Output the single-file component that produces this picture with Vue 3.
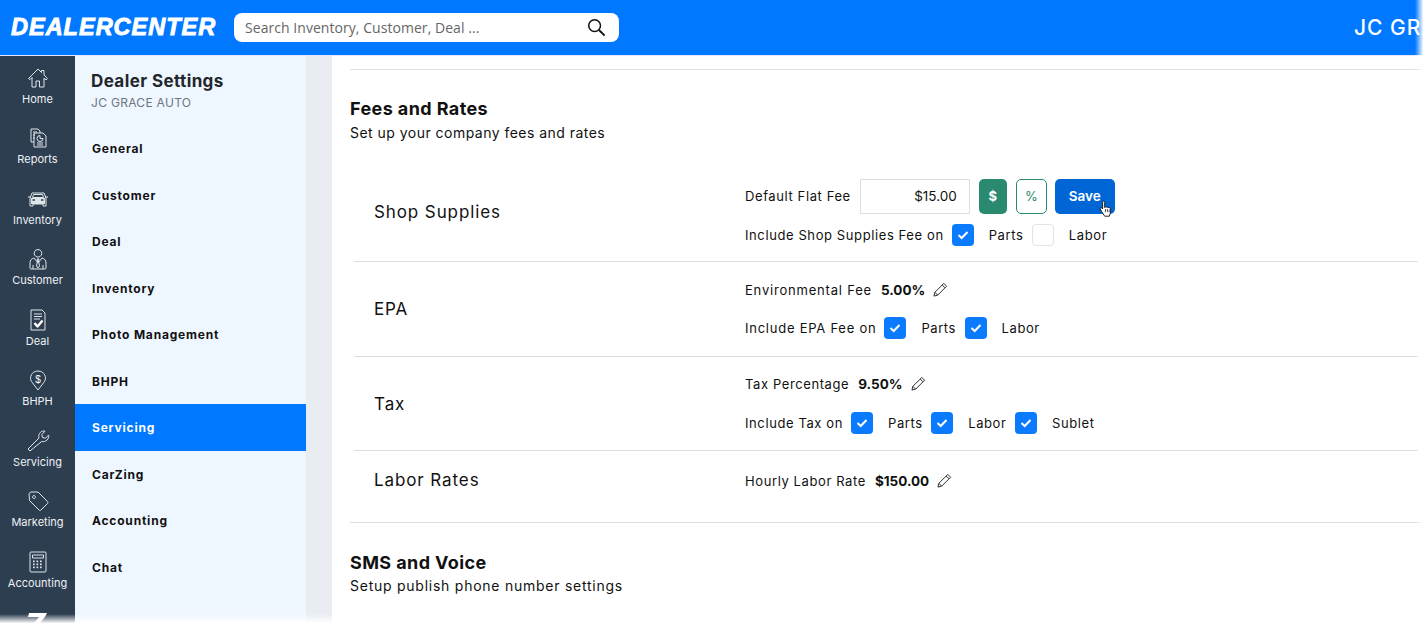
<script setup>
const P = {
  home: ['M2.5 12.5 12 3l3.5 3.5V4.5h2.5v4.5l3.5 3.5-1.5 1.500-2-2V21h-4.500v-6h-3.500v6H6v-9.500l-2 2z'],
  reports: ['M5 3h7l2 2v2M5 3v13h3M7 6h4M7 9h2M7 12h2', 'M8 7h7l2 0 3 3v11H8z', 'M11 17h6M11 19h6', 'M14 9.500a3 3 0 1 0 3 3h-3z'],
  car: ['M6 6h12l2 5v8h-3v-2H7v2H4v-8z', 'M7.500 7.500h9l1 3h-11zM2 10h3M19 10h3', 'M7 13h2M15 13h2'],
  customer: ['M12 2.500a3.800 3.800 0 1 1-.01 0z', 'M8 11c-2.500.8-4 2-4 5v5c0 .6.500 1 1 1h14c.6 0 1-.4 1-1v-5c0-3-1.500-4.200-4-5l-4 5z', 'M11 12h2l-.5 2 1 5-1.500 2-1.500-2 1-5z', 'M7 18v4M17 18v4'],
  deal: ['M5 2h11l3 3v17H5z', 'M8 6h8M8 8.500h8M8 11h6'],
  bhph: ['M12 22 5.500 13.500C3 9.500 5.500 3 12 3s9 6.500 6.500 10.500z'],
  servicing: ['M4 22l-2-2 11-11c-1-3 .8-7 5-7l1 .2-3.200 3.300.7 3 3 .7L22.700 6c.6 4-3 7.500-7 6.500z'],
  marketing: ['M3 4.500 5 3h7l9.500 9.500c.6.600.6 1.400 0 2L15 21c-.6.600-1.400.600-2 0L3.500 11.500z', 'M8 6.500a1.500 1.500 0 1 1-.01 0z'],
  accounting: ['M5 2h14c.6 0 1 .4 1 1v18c0 .6-.4 1-1 1H5c-.6 0-1-.4-1-1V3c0-.6.4-1 1-1z', 'M6.500 5h11v3h-11z'],
}
const rail = [
  ['Home', 'home'], ['Reports', 'reports'], ['Inventory', 'car'], ['Customer', 'customer'], ['Deal', 'deal'],
  ['BHPH', 'bhph'], ['Servicing', 'servicing'], ['Marketing', 'marketing'], ['Accounting', 'accounting'],
].map(([label, icon]) => ({ label, icon, paths: P[icon] }))
const menu = ['General', 'Customer', 'Deal', 'Inventory', 'Photo Management', 'BHPH', 'Servicing', 'CarZing', 'Accounting', 'Chat']
const keys = []
for (let y = 11; y < 20; y += 3) for (let x = 8; x < 17; x += 3.500) keys.push({ x, y })
</script>

<template>
  <div class="page">
    <header class="topbar">
      <div class="logo">DEALERCENTER</div>
      <div class="search">
        <input class="search-input" placeholder="Search Inventory, Customer, Deal ..." />
        <svg class="search-icon" viewBox="0 0 20 20" fill="none" stroke="#111" stroke-width="1.600"><circle cx="8" cy="8" r="6.200" /><path d="m12.600 12.600 6 6" stroke-width="2" /></svg>
      </div>
      <div class="dealer">JC GRACE AUTO</div>
    </header>

    <div class="body">
      <nav class="rail">
        <a v-for="item in rail" :key="item.label" class="rail-item">
          <svg class="rail-icon" viewBox="0 0 24 24" fill="none" stroke="#dfe4e9" stroke-width="1" stroke-linejoin="round">
            <path v-for="d in item.paths" :key="d" :d="d" />
            <template v-if="item.icon === 'deal'"><path d="m8.500 15 3 3.500 5-6" stroke="#fff" stroke-width="2.400" /></template>
            <text v-if="item.icon === 'bhph'" class="dollar" x="12" y="14.500">$</text>
            <template v-if="item.icon === 'accounting'"><rect v-for="k in keys" :key="k.x + '-' + k.y" :x="k.x - 1" :y="k.y - .500" width="1.700" height="1.700" fill="#dfe4e9" stroke="none" /></template>
            <template v-if="item.icon === 'car'"><path d="M5 11h14v6H5z" fill="#dfe4e9" stroke="none" /><path d="M6.500 13h2.500M15 13h2.500" stroke="#2d3e50" stroke-width="1.500" /></template>
          </svg>
          <span class="rail-label">{{ item.label }}</span>
        </a>
        <svg class="rail-logo" viewBox="0 0 20 14"><path d="M1 0h18l-1.500 3L9 14H3l8-10H0z" fill="#fff" /></svg>
      </nav>

      <aside class="panel">
        <div class="panel-title">Dealer Settings</div>
        <div class="panel-sub">JC GRACE AUTO</div>
        <ul class="menu">
          <li v-for="m in menu" :key="m" class="menu-item" :class="{ active: m === 'Servicing' }">{{ m }}</li>
        </ul>
      </aside>

      <div class="gutter"></div>

      <main class="content">
        <section class="section fees">
          <h2 class="section-title">Fees and Rates</h2>
          <p class="section-sub">Set up your company fees and rates</p>

          <div class="rows">
            <div class="row row-shop">
              <div class="row-name">Shop Supplies</div>
              <div class="fields gap-10">
                <div class="line">
                  <span>Default Flat Fee</span>
                  <input class="amount" value="$15.00" />
                  <button class="unit unit-on">$</button>
                  <button class="unit unit-off">%</button>
                  <button class="save">Save
                    <svg class="hand" viewBox="0 0 16 20"><path d="M4 1.500c.8-.8 2-.3 2 .8v6l.8-.2c.5-.8 1.700-.7 2 .2.600-.5 1.600-.3 1.900.5.700-.4 1.700 0 1.800.9.300 1.500.2 3.500-.3 5l-1 3.300H6l-3-4.500L1 10c-.4-1 .7-2 1.700-1.200l1 1V2.300z" fill="#fff" stroke="#111" stroke-width="1" stroke-linejoin="round" /><path d="M6.800 10v3.500M9 10v3.500M11 10.500v3" stroke="#111" stroke-width=".8" /></svg>
                  </button>
                </div>
                <div class="line">
                  <span class="cap">Include Shop Supplies Fee on</span>
                  <span class="check on"><svg viewBox="0 0 22 22"><path d="m6.500 11 3.200 3 5.800-6" /></svg></span>
                  <span class="opt">Parts</span>
                  <span class="check"></span>
                  <span class="opt">Labor</span>
                </div>
              </div>
            </div>

            <div class="row row-epa">
              <div class="row-name">EPA</div>
              <div class="fields gap-16">
                <div class="line value-line">
                  <span class="wide">Environmental Fee</span><b>5.00%</b>
                  <svg class="pencil" viewBox="0 0 16 16" fill="none" stroke="#222" stroke-width="1"><path d="M11.500 1.500 14.500 4.500 5 14l-4 1 1-4zM9.800 3.200l3 3M2 11l3 3" /></svg>
                </div>
                <div class="line">
                  <span class="cap cap-epa">Include EPA Fee on</span>
                  <span class="check on"><svg viewBox="0 0 22 22"><path d="m6.500 11 3.200 3 5.800-6" /></svg></span>
                  <span class="opt">Parts</span>
                  <span class="check on"><svg viewBox="0 0 22 22"><path d="m6.500 11 3.200 3 5.800-6" /></svg></span>
                  <span class="opt">Labor</span>
                </div>
              </div>
            </div>

            <div class="row row-tax">
              <div class="row-name">Tax</div>
              <div class="fields gap-17">
                <div class="line value-line">
                  <span>Tax Percentage</span><b>9.50%</b>
                  <svg class="pencil" viewBox="0 0 16 16" fill="none" stroke="#222" stroke-width="1"><path d="M11.500 1.500 14.500 4.500 5 14l-4 1 1-4zM9.800 3.200l3 3M2 11l3 3" /></svg>
                </div>
                <div class="line">
                  <span class="cap">Include Tax on</span>
                  <span class="check on"><svg viewBox="0 0 22 22"><path d="m6.500 11 3.200 3 5.800-6" /></svg></span>
                  <span class="opt">Parts</span>
                  <span class="check on"><svg viewBox="0 0 22 22"><path d="m6.500 11 3.200 3 5.800-6" /></svg></span>
                  <span class="opt">Labor</span>
                  <span class="check on"><svg viewBox="0 0 22 22"><path d="m6.500 11 3.200 3 5.800-6" /></svg></span>
                  <span class="opt">Sublet</span>
                </div>
              </div>
            </div>

            <div class="row row-labor">
              <div class="row-name">Labor Rates</div>
              <div class="fields fields-labor">
                <div class="line value-line">
                  <span>Hourly Labor Rate</span><b>$150.00</b>
                  <svg class="pencil" viewBox="0 0 16 16" fill="none" stroke="#222" stroke-width="1"><path d="M11.500 1.500 14.500 4.500 5 14l-4 1 1-4zM9.800 3.200l3 3M2 11l3 3" /></svg>
                </div>
              </div>
            </div>
          </div>
        </section>

        <section class="section sms">
          <h2 class="section-title">SMS and Voice</h2>
          <p class="section-sub sub-sms">Setup publish phone number settings</p>
        </section>
      </main>
    </div>

    <div class="fade-right"></div>
    <div class="fade-bottom"></div>
  </div>
</template>

<style scoped>
.page {
  position: relative;
  width: 1425px;
  height: 625px;
  overflow: hidden;
  display: flex;
  flex-direction: column;
  background: #fff;
  font-family: Inter, "Liberation Sans", sans-serif;
  color: #111;
}
.topbar {
  flex: 0 0 55px;
  display: flex;
  align-items: center;
  background: #0078ff;
  border-bottom: 1px solid #dfe9f5;
  box-sizing: content-box;
  white-space: nowrap;
}
.logo {
  flex: 0 0 234px;
  padding-left: 11px;
  box-sizing: border-box;
  font-family: "Liberation Sans", sans-serif;
  font-style: italic;
  font-weight: 700;
  font-size: 23.500px;
  letter-spacing: 1px;
  color: #fff;
  -webkit-text-stroke: .9px #fff;
}
.search {
  position: relative;
  flex: 0 0 385px;
  height: 29px;
  background: #fff;
  border-radius: 8px;
}
.search-input {
  width: 330px;
  height: 29px;
  border: 0;
  outline: 0;
  padding: 0 0 0 11px;
  background: transparent;
  font-family: "Open Sans", sans-serif;
  font-size: 14px;
  letter-spacing: .05px;
}
.search-input::placeholder { color: #666; opacity: 1; }
.search-icon {
  position: absolute;
  left: 353px;
  top: 5px;
  width: 19px;
  height: 19px;
}
.dealer {
  margin-left: 735px;
  font-size: 21px;
  font-weight: 500;
  letter-spacing: 1px;
  color: #fff;
}
.body {
  flex: 1;
  min-height: 0;
  display: flex;
}
.rail {
  position: relative;
  flex: 0 0 75px;
  background: #2d3e50;
  display: flex;
  flex-direction: column;
  overflow: hidden;
}
.rail-item {
  flex: 0 0 60.500px;
  display: flex;
  flex-direction: column;
  align-items: center;
  padding-top: 9.500px;
  box-sizing: border-box;
}
.rail-icon {
  width: 24px;
  height: 24px;
}
.dollar {
  font-family: "Liberation Sans", sans-serif;
  font-size: 10px;
  text-anchor: middle;
  fill: #fff;
  stroke: none;
}
.rail-label {
  margin-top: 2px;
  font-size: 11px;
  line-height: 15px;
  color: #eef1f4;
}
.rail-logo {
  position: absolute;
  left: 28px;
  top: 557px;
  width: 20px;
  height: 14px;
}
.panel {
  flex: 0 0 231px;
  background: #eef6ff;
}
.panel-title {
  margin: 15px 0 0 16px;
  font-size: 17px;
  line-height: 21px;
  font-weight: 700;
  letter-spacing: .4px;
  color: #23262b;
}
.panel-sub {
  margin: 2px 0 0 16px;
  font-size: 12px;
  line-height: 18px;
  letter-spacing: .3px;
  color: #6c757d;
}
.menu {
  list-style: none;
  margin: 13px 0 0;
  padding: 0;
}
.menu-item {
  height: 46.500px;
  line-height: 47px;
  padding-left: 17px;
  font-size: 12px;
  font-weight: 700;
  letter-spacing: .8px;
  color: #111;
}
.menu-item.active {
  background: #0078ff;
  color: #fff;
}
.gutter {
  flex: 0 0 26px;
  background: #e9edf2;
}
.content {
  flex: 1;
  min-width: 0;
  padding: 13px 3px 0 18px;
}
.section-title {
  margin: 0;
  font-size: 18px;
  line-height: 24px;
  font-weight: 700;
  letter-spacing: .4px;
  color: #111;
}
.section-sub {
  margin: 0;
  font-size: 14px;
  line-height: 24px;
  letter-spacing: .47px;
  color: #111;
}
.sub-sms {
  margin-top: -1px;
  letter-spacing: .75px;
}
.fees {
  border-top: 1px solid #e1e1e1;
  border-bottom: 1px solid #ddd;
  padding: 27px 0 13px;
}
.sms {
  padding-top: 28px;
}
.rows {
  margin: 18px 4px 0 4px;
}
.row {
  display: flex;
  align-items: center;
  box-sizing: border-box;
  border-bottom: 1px solid #ddd;
}
.row-shop { height: 99px; }
.row-epa { height: 95px; }
.row-tax { height: 94px; }
.row-labor { height: 58px; border-bottom: 0; }
.row-name {
  flex: 0 0 391px;
  padding-left: 20px;
  box-sizing: border-box;
  font-size: 17px;
  letter-spacing: .9px;
}
.fields {
  display: flex;
  flex-direction: column;
  font-size: 13px;
  letter-spacing: .6px;
}
.fields-labor { padding-top: 2px; }
.gap-10 { gap: 10px; }
.gap-16 { gap: 16px; }
.gap-17 { gap: 17px; }
.line {
  display: flex;
  align-items: center;
  min-height: 22px;
}
.wide { letter-spacing: .8px; }
.value-line b {
  margin-left: 9px;
  font-size: 13.500px;
  font-weight: 700;
  letter-spacing: 0;
}
.pencil {
  width: 15px;
  height: 15px;
  margin-left: 8px;
  margin-bottom: 2px;
}
.amount {
  width: 110px;
  height: 35px;
  margin-left: 9px;
  padding: 0 12px 0 0;
  box-sizing: border-box;
  border: 1px solid #ddd;
  outline: 0;
  text-align: right;
  font-family: inherit;
  font-size: 13.500px;
  letter-spacing: 0;
  color: #111;
}
.unit {
  height: 35px;
  padding: 0;
  border-radius: 5px;
  font-family: inherit;
  font-size: 13px;
}
.unit-on {
  width: 28px;
  margin-left: 9px;
  background: #2a8a70;
  border: 0;
  color: #fff;
  font-weight: 700;
}
.unit-off {
  width: 31px;
  margin-left: 9px;
  background: #fff;
  border: 1px solid #2a8a70;
  color: #2a8a70;
}
.save {
  position: relative;
  width: 60px;
  height: 35px;
  margin-left: 8px;
  padding: 0;
  border: 0;
  border-radius: 5px;
  background: #0066d6;
  color: #fff;
  font-family: inherit;
  font-size: 13.500px;
  font-weight: 600;
}
.hand {
  position: absolute;
  left: 44px;
  top: 21px;
  width: 15px;
  height: 18px;
}
.check {
  flex: 0 0 22px;
  width: 22px;
  height: 22px;
  box-sizing: border-box;
  border: 1px solid #e2e2e2;
  border-radius: 4px;
  background: #fff;
}
.check.on {
  background: #0a7aff;
  border: 0;
}
.check svg {
  display: block;
  width: 22px;
  height: 22px;
  fill: none;
  stroke: #fff;
  stroke-width: 2;
}
.cap { margin-right: 8px; }
.cap-epa { letter-spacing: .75px; }
.opt { margin: 0 8.500px 0 15px; }
.fade-right {
  position: absolute;
  top: 0;
  right: 0;
  width: 10px;
  height: 100%;
  background: linear-gradient(to right, rgba(255, 255, 255, 0), #fff 85%);
}
.fade-bottom {
  position: absolute;
  left: 0;
  bottom: 0;
  width: 100%;
  height: 11px;
  background: linear-gradient(to bottom, rgba(255, 255, 255, 0), #fff 85%);
}
</style>

<style>
html, body { margin: 0; overflow: hidden; background: #fff; }
</style>
